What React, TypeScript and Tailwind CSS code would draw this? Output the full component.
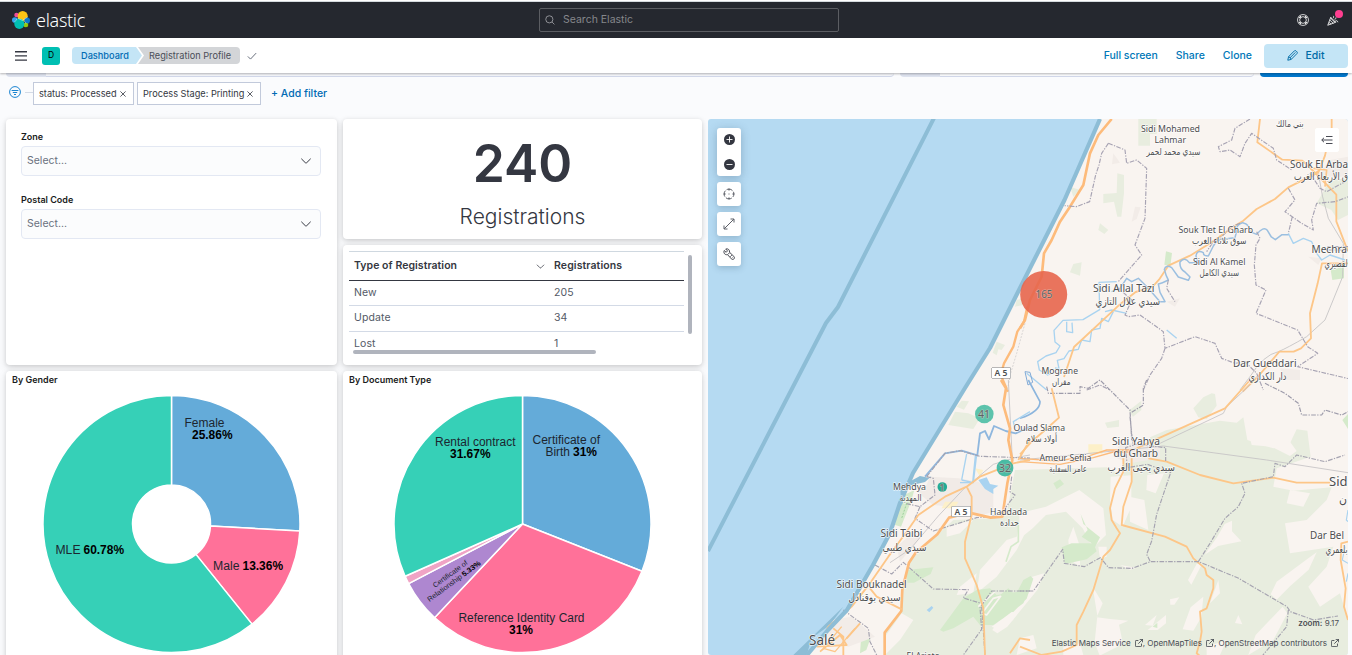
import React from "react";

type Slice = { value: number; color: string };

function slicePath(cx: number, cy: number, r: number, inner: number, from: number, to: number) {
  const pt = (rad: number, t: number) => {
    const a = t * Math.PI * 2 - Math.PI / 2;
    return `${(cx + rad * Math.cos(a)).toFixed(2)} ${(cy + rad * Math.sin(a)).toFixed(2)}`;
  };
  const large = to - from > 0.5 ? 1 : 0;
  if (inner === 0) return `M${cx} ${cy}L${pt(r, from)}A${r} ${r} 0 ${large} 1 ${pt(r, to)}Z`;
  return `M${pt(inner, from)}L${pt(r, from)}A${r} ${r} 0 ${large} 1 ${pt(r, to)}L${pt(inner, to)}A${inner} ${inner} 0 ${large} 0 ${pt(inner, from)}Z`;
}

function Slices({ cx, cy, r, inner, data }: { cx: number; cy: number; r: number; inner: number; data: Slice[] }) {
  const total = data.reduce((s, d) => s + d.value, 0);
  let acc = 0;
  return (
    <g stroke="#fff" strokeWidth="1.5" strokeLinejoin="round">
      {data.map((d) => {
        const from = acc / total;
        acc += d.value;
        return <path key={d.color} d={slicePath(cx, cy, r, inner, from, acc / total)} fill={d.color} />;
      })}
    </g>
  );
}

function T({ x, y, w, s = 12, b, children }: { x: number; y: number; w?: number; s?: number; b?: boolean; children: string }) {
  return (
    <text x={x} y={y} fontSize={s} textLength={w} lengthAdjust="spacingAndGlyphs" fontWeight={b ? 700 : 400} fill={b ? "#000" : "#1c2630"}>
      {children}
    </text>
  );
}

function Panel({ className = "", children }: { className?: string; children: React.ReactNode }) {
  return (
    <section className={`overflow-hidden rounded bg-white shadow-[0_1px_4px_rgba(0,0,0,0.12),0_3px_9px_rgba(0,0,0,0.10)] ${className}`}>
      {children}
    </section>
  );
}

function Chevron({ className = "" }: { className?: string }) {
  return (
    <svg className={className} viewBox="0 0 12 12" fill="none" stroke="#343741" strokeWidth="1" strokeLinecap="round">
      <path d="M1.6 4l3.7 3.7q.7.6 1.4 0L10.4 4" />
    </svg>
  );
}

function Header() {
  return (
    <header className="flex h-9 shrink-0 items-center bg-[#25282f] pl-3 pr-3">
      <svg className="h-[18px] w-[18px]" viewBox="0 0 32 32">
        <ellipse cx="8" cy="7" rx="4" ry="4" fill="#f04e98" />
        <ellipse cx="5" cy="16" rx="5" ry="5" fill="#36a2ef" />
        <ellipse cx="19" cy="9.500" rx="9" ry="9.500" fill="#fec514" />
        <ellipse cx="27" cy="17" rx="5" ry="5.500" fill="#0b77cc" />
        <ellipse cx="24.500" cy="25" rx="4.500" ry="4" fill="#93c90e" />
        <ellipse cx="13" cy="22.800" rx="9" ry="9" fill="#00bfb3" />
        <path d="M9.500 12.500l9 4.300 8.500-5.500M9 14q-1.500 2.500-4.500 5.500M22 18l3 4.500" fill="none" stroke="#fff" strokeWidth=".8" />
      </svg>
      <span className="ml-[6px] w-[430px] font-['Noto_Sans'] text-[18px] font-light leading-none tracking-[-0.3px] text-white">elastic</span>
      <div className="ml-[73px] flex h-6 w-[300px] items-center rounded-[2px] border border-[#5b5d62] pl-[5px]">
        <svg className="h-[10px] w-[10px]" viewBox="0 0 12 12" fill="none" stroke="#a2a4a8" strokeWidth="1">
          <circle cx="5.200" cy="5.200" r="4.300" />
          <path d="M8.500 8.500l2.800 2.800" />
        </svg>
        <span className="ml-[8px] text-[10.500px] text-[#85878b]">Search Elastic</span>
      </div>
      <div className="ml-auto flex items-center">
        <svg className="h-[12px] w-[12px]" viewBox="0 0 16 16" fill="none" stroke="#fff" strokeWidth="1">
          <circle cx="8" cy="8" r="7.300" />
          <circle cx="8" cy="8" r="4.500" />
          <path d="M2.200 4l2.600 1.500M4 2.200l1.500 2.600M12 2.200l-1.500 2.600M13.800 4l-2.600 1.500M2.200 12l2.600-1.500M4 13.800l1.500-2.600M13.800 12l-2.600-1.500M12 13.800l-1.500-2.600" strokeWidth="1.200" />
        </svg>
        <span className="relative ml-[18px] mr-px">
          <svg className="h-[12px] w-[12px]" viewBox="0 0 16 16" fill="none" stroke="#fff" strokeWidth="1.100">
            <path d="M5 4.500L1 15l10.500-4zM3.700 8l4.700 4.500M5 4.500c1 3 3.500 5.500 6.500 6.500M2.500 11l3 2.700M8 5.500c1-.5 1-2 .5-3M10 7c1.500 0 2-1 2-2.500M11 9.500c1.500-1 3-.8 3.500 1.500" />
          </svg>
          <i className="absolute -top-[4px] left-[8px] h-2 w-2 rounded-full bg-[#fe3e90]" />
        </span>
      </div>
    </header>
  );
}

function NavBar() {
  return (
    <nav className="relative z-10 flex h-[35px] shrink-0 items-center bg-white pl-[15px] pr-1 shadow-[0_1px_2px_rgba(0,0,0,0.28)]">
      <svg className="h-[10px] w-3" viewBox="0 0 12 10" fill="#343741">
        <path d="M0 0h12v1.400H0zM0 4.200h12v1.400H0zM0 8.400h12v1.400H0z" />
      </svg>
      <span className="ml-[15px] flex h-[18px] w-[18px] items-center justify-center rounded-[3px] bg-[#00bfb3] text-[8.500px] text-black">D</span>
      <span className="ml-3 flex h-[17px] w-[70px] items-center rounded-l-[4px] bg-[#c4e5f6] pl-[9px] text-[9.200px] font-medium text-[#006bb4] [clip-path:polygon(0_0,64px_0,100%_50%,64px_100%,0_100%)]">
        Dashboard
      </span>
      <span className="-ml-[4px] flex h-[17px] w-[102px] items-center rounded-r-[4px] bg-[#d3d5d8] pl-[11px] text-[9.200px] text-[#4a4d57] [clip-path:polygon(0_0,100%_0,100%_100%,0_100%,6px_50%)]">
        Registration Profile
      </span>
      <svg className="ml-[7px] h-[10px] w-[10px]" viewBox="0 0 12 12" fill="none" stroke="#69707d" strokeWidth="1.200">
        <path d="M1 6.500l3.200 3.200L11 2.500" />
      </svg>
      <div className="ml-auto flex items-center text-[10.500px] font-medium text-[#0077b8]">
        <span className="tracking-[-0.05px]">Full screen</span>
        <span className="ml-[18px]">Share</span>
        <span className="ml-[18px]">Clone</span>
        <span className="ml-3 flex h-6 w-[84px] items-center justify-center rounded bg-[#c4e5f6] text-[#006ba6]">
          <svg className="mr-[7px] h-[11px] w-[11px]" viewBox="0 0 14 14" fill="none" stroke="#006ba6" strokeWidth="1.200">
            <path d="M1 13l1-4.500L9.500 1q1-.7 2 .2l1.200 1.200q.9 1 .1 2L5.300 12zM2 8.700q2.600.4 3.300 3.200M3.500 10.300L10.700 3" />
          </svg>
          Edit
        </span>
      </div>
    </nav>
  );
}

function QueryBarEdge() {
  return (
    <div className="flex h-[4px] shrink-0 pl-[6px] pr-1">
      <i className="w-10 rounded-bl-[4px] bg-[#dde2ee]" />
      <i className="mr-[6px] w-[848px] rounded-br-[4px] border-b border-[#d0d6e8] bg-[#f4f6fa]" />
      <i className="w-[40px] rounded-bl-[4px] bg-[#dde2ee]" />
      <i className="w-[314px] rounded-br-[4px] border-b border-[#d0d6e8]" />
      <i className="ml-[6px] flex-1 rounded-b-[4px] bg-[#0077cc]" />
    </div>
  );
}

function FilterPill({ className, children }: { className: string; children: string }) {
  return (
    <span className={`flex h-[23px] items-center justify-between border border-[#c2cadb] bg-white pl-[5px] pr-[7px] text-[9.200px] text-[#343741] ${className}`}>
      {children}
      <svg className="h-[6px] w-[6px]" viewBox="0 0 6 6" stroke="#343741" strokeWidth=".8">
        <path d="M.4.4l5.200 5.200M5.600.4L.4 5.600" />
      </svg>
    </span>
  );
}

function FilterBar() {
  return (
    <div className="flex h-[42px] shrink-0 items-start pl-[9px] pt-[5px]">
      <svg className="mt-[4px] h-[12px] w-[12px]" viewBox="0 0 12 12" fill="none" stroke="#0077cc" strokeWidth=".9">
        <circle cx="6" cy="6" r="5.400" />
        <path d="M2.600 4.500h6.800M3.800 6.500h4.400M5 8.500h2" />
      </svg>
      <i className="ml-[4px] mt-[10px] h-px w-2 bg-[#d3dae6]" />
      <FilterPill className="w-[101px]">status: Processed</FilterPill>
      <FilterPill className="ml-[3px] w-[124px]">Process Stage: Printing</FilterPill>
      <span className="ml-[10px] text-[10.500px] font-medium leading-[23px] text-[#006bb4]">+ Add filter</span>
    </div>
  );
}

function SelectField({ label }: { label: string }) {
  return (
    <div className="flex w-[300px] flex-col">
      <span className="text-[9px] font-semibold leading-[13px] text-[#1a1c21]">{label}</span>
      <div className="mt-[3px] flex h-[30px] items-center justify-between rounded border border-[#e3e8f3] bg-[#fbfcfd] pl-[5px] pr-2">
        <span className="text-[10.500px] leading-[14px] text-[#69707d]">Select...</span>
        <Chevron className="h-3 w-3" />
      </div>
    </div>
  );
}

function RegistrationTable() {
  const rows = [
    ["New", "205", "h-[25px] border-b"],
    ["Update", "34", "h-[26px] border-b pb-[2px]"],
    ["Lost", "1", "h-[24px]"],
  ];
  return (
    <div className="relative ml-[6px] mt-[6px] w-[335px] text-[10.500px]">
      <div className="flex h-[30px] items-center border-b border-t border-b-[#343741] border-t-[#cfd8e0] pl-[5px] font-semibold text-[#343741]">
        <span className="w-[182px] tracking-[0.05px]">Type of Registration</span>
        <Chevron className="h-[9px] w-[9px]" />
        <span className="ml-[9px] tracking-[0.1px]">Registrations</span>
      </div>
      {rows.map(([a, b, c]) => (
        <div key={a} className={`flex items-center border-[#d3dae6] pl-[5px] tracking-[0.1px] text-[#535966] ${c}`}>
          <span className="w-[200px]">{a}</span>
          <span>{b}</span>
        </div>
      ))}
      <i className="absolute left-[339px] top-[4px] h-[79px] w-[4px] rounded-full bg-[#b0b4bd]" />
      <i className="absolute left-[4px] top-[99px] h-[4px] w-[243px] rounded-full bg-[#b0b4bd]" />
    </div>
  );
}

const GENDER: Slice[] = [
  { value: 25.86, color: "#64abd9" },
  { value: 13.36, color: "#ff7199" },
  { value: 60.78, color: "#36d0b7" },
];
const DOCS: Slice[] = [
  { value: 31, color: "#64abd9" },
  { value: 31, color: "#ff7199" },
  { value: 5.33, color: "#ae87d0" },
  { value: 1, color: "#f0a4c5" },
  { value: 31.67, color: "#36d0b7" },
];

function GenderChart() {
  return (
    <svg className="block h-[266px] w-[331px] font-['Liberation_Sans']" viewBox="6 389 331 266">
      <Slices cx={171.5} cy={524} r={128.5} inner={39} data={GENDER} />
      <T x={184.500} y={427} w={40}>Female</T>
      <T x={192} y={439} w={40.500} b>25.86%</T>
      <T x={55.500} y={554.400} w={25}>MLE</T>
      <T x={83.500} y={554.400} w={40.500} b>60.78%</T>
      <T x={213} y={569.500} w={26.500}>Male</T>
      <T x={242.500} y={569.500} w={40.500} b>13.36%</T>
    </svg>
  );
}

function DocumentChart() {
  return (
    <svg className="block h-[266px] w-[359px] font-['Liberation_Sans']" viewBox="343 389 359 266">
      <Slices cx={522.5} cy={524} r={128.5} inner={0} data={DOCS} />
      <T x={435} y={446.300} w={80.500}>Rental contract</T>
      <T x={450} y={458.300} w={40.500} b>31.67%</T>
      <T x={532.500} y={444.300} w={67.500}>Certificate of</T>
      <T x={545.500} y={456.300} w={24.500}>Birth</T>
      <T x={573} y={456.300} w={24} b>31%</T>
      <T x={458.500} y={622.300} w={126}>Reference Identity Card</T>
      <T x={509} y={634.300} w={24} b>31%</T>
      <g transform="translate(435 588) rotate(-36)">
        <T x={0} y={0} w={41} s={7.200}>Certificate of</T>
      </g>
      <g transform="translate(429.500 602) rotate(-36)">
        <T x={0} y={0} w={41} s={7.200}>Relationship</T>
        <T x={42.500} y={0} w={21.500} s={7.200} b>5.33%</T>
      </g>
    </svg>
  );
}

type Label = [string, number, number, number, number];
// text, left, baseline, width, size
const LABELS: Label[] = [
  ["Sidi Mohamed", 1141, 132, 59, 9.7],
  ["Lahmar", 1154.5, 143, 31.500, 9.7],
  ["سيدي محمد لحمر", 1146.500, 155, 54, 9.5],
  ["بني مالك", 1276, 127, 27.500, 9.5],
  ["Souk El Arba", 1290, 167.500, 58, 10.800],
  ["ق الأربعاء الغرب", 1294, 180, 54, 10.500],
  ["Souk Tlet El Gharb", 1178.500, 233, 74.500, 9.7],
  ["سوق ثلاثاء الغرب", 1192, 244, 54.500, 9.5],
  ["Sidi Al Kamel", 1193, 264.500, 52.500, 9.7],
  ["سيدي الكامل", 1199.500, 276, 39.500, 9.5],
  ["Mechra", 1311.500, 252.500, 35.500, 10.800],
  ["لقصيري", 1324.500, 267, 23, 10.500],
  ["Sidi Allal Tazi", 1093, 291.500, 61.500, 10.800],
  ["سيدي علال التازي", 1095.500, 305, 64.500, 10.500],
  ["Mograne", 1041.500, 373.500, 36.500, 9.7],
  ["مقران", 1052, 385, 18.500, 9.5],
  ["Dar Gueddari", 1233, 367, 63.500, 10.800],
  ["دار الكداري", 1248.500, 380, 38, 10.500],
  ["Oulad Slama", 1013.500, 430.500, 51.500, 9.7],
  ["أولاد سلام", 1026, 442, 31, 9.5],
  ["Ameur Seflia", 1039.500, 460.500, 52, 9.7],
  ["عامر السفلية", 1049, 471.500, 38, 9.5],
  ["Sidi Yahya", 1112, 444.500, 48, 10.800],
  ["du Gharb", 1113.500, 456.500, 44.500, 10.800],
  ["سيدي يحيى الغرب", 1107.500, 470.500, 67.500, 10.500],
  ["Mehdya", 893, 489.500, 33, 9.7],
  ["المهدية", 899.500, 500.500, 22, 9.5],
  ["Sidi Taibi", 880.500, 537, 42, 10.800],
  ["سيدي طيبي", 882.500, 550.500, 44, 10.500],
  ["Haddada", 990, 514.500, 37, 9.7],
  ["حدادة", 1000, 525.500, 19, 9.5],
  ["Sidi Bouknadel", 836.500, 587.500, 70, 10.800],
  ["سيدي بوقنادل", 848.500, 601, 52, 10.500],
  ["Salé", 809, 645, 26, 13.800],
  ["El Arjate", 906.500, 659, 33, 9.7],
  ["Sid", 1329, 485.500, 18.500, 13],
  ["ن", 1339, 503, 8, 12],
  ["Dar Bel", 1310, 539, 34, 10.800],
  ["بلعمري", 1325.500, 552.500, 22, 10.500],
];

const FOREST = "#e8eddf";
const GREEN = "#d5eacb";
const ROAD = "#fdc688";
const MAJOR = "#fdbb7b";
const RIVER = "#a9d3f0";
const LAND = "#f9f4f0";

function MapCanvas() {
  return (
    <svg className="block h-[536px] w-[640px]" viewBox="708 119 640 536" fill="none" strokeLinejoin="round">
      <rect x="708" y="119" width="640" height="536" fill="#b5daf2" />
      <path d="M1101 119L1065 200 1020 288 990 348 965 388 913 473 900 503 890 533 873 565 847 610 828 630 807 655H1348V119z" fill={LAND} />
      <path d="M934 118L838 307 826 323 708 551" stroke="#8dbdd6" strokeWidth="4" />

      {/* north-east lowlands */}
      <g transform="translate(1020 110) scale(.33333)">
        <path d="M355 27h55v45h-20v35h-35zM292 190l20 5v55l-8 70-12 0-10-45-32 5v-28l40-3zM150 230l30 10-20 20zM240 340l25 20-12 12-18-12zM160 462l25-5-5 40-30-10zM890 280l40-70 54-5v110l-30 15-20-30z" fill={FOREST} />
        <path d="M438 424l18 5-5 40-18-5zM932 480l40-10v35l-35 5z" fill={GREEN} />
        <path d="M345 290l-10 45 15 -8 12-35zM280 130l20 28-24 5zM440 575l40-10-15 25zM780 775l60 5v30h-50zM865 440l40 5-10 20zM890 200l40-50 54-10 0 60z" fill="#f2ece8" />
        <g stroke="#c2c0c2" strokeWidth="2.500">
          <path d="M895 190Q905 260 925 325L970 400 968 500 915 630 860 680Q800 715 775 725 730 735 690 800L660 840" />
        </g>
        <g stroke={RIVER} strokeWidth="4">
          <path d="M805 370l15 30 30-15 25 10 15 35 15 20 25-15 45 15M290 515l-53 2 2 82-50 30-60 2-27 30 3 35 15 12-12 20-30 10-25 17 5 25 25 15 10-5M140 635v30l18 3-2-30M280 605l-15 30-20-10-5 30-25 5-5 35-25-5-10 28-28 5-15 23-20 5 5 25-12-2" />
          <path d="M470 685l-30-25M20 790l60 50M320 610l-45-10-20 5" />
        </g>
        <g stroke={MAJOR} strokeWidth="8">
          <path d="M275 27L235 75 210 130 190 225 150 290 120 335 95 390 72 430 65 500 30 570 15 630 0 655" />
        </g>
        <g stroke={ROAD} strokeWidth="5.500">
          <path d="M720 27l-8 70 75 52 60 3 42 40 60 62v80l35 90M935 27v35l-10 30-10 45-20 50-90 45-40 35-55 30-40 35-25 15-70 50-65 40-65 30-28 42-20 22-50 15-45 35-140 130-30 90M984 460h-78l-13 60-23 90 3 75-30 30-22 10h-43l-60 70-50 50" />
        </g>
        <path d="M690 365q0-22-22-27-22 8-18 25l-5 20-40 5-15 5-10 15-15 30q-15 0-15-10-20-10-22 10l5 20-25 0q-15-20-28-2-2 20 15 30l15 15-5 10-30-10-20-28q-18-10-22 5 5 20 12 32-20 10-30 12l5 25 15 28-15 0-35-40-30-30-20 10-15-10-20 30-25 10M690 365l20 8q20-25 32-12l12 20 12 8 20-15h20" stroke="#9bbfe0" strokeWidth="4.500" />
        <g stroke="#a7a3b3" strokeWidth="3.500" strokeDasharray="14 4 4 4">
          <path d="M690 27l-45 28-10 35-40 20 5 15 30-5 30 20 15-40 20-30 65 45 10 35 45 30M265 100l50 20 5 40 30-10 30 25-5 150-30 80 20 30-70 80M265 100l-20 30-8 35-10 30-18 80-40 15-35-3M870 190l30 45 20 10 55-30M805 235l20 35-30 35 50 35 35 20-5-30 15-50 55-5 55-20M817 320l-12 50M660 340l-25 10-30 30-25 15-20 30M445 510l-5 25 25 40M710 365l10 20-12 20-5 60 5 60 30 15-30 70 125 50 30 50 30 20-60 40 170 40M984 410h-60l-5 10h65M290 530l45 40-20 45 10 5 35-5 70 50 5 50 90-35 60 20 20 45 40 15 30-5 35 35 20 50M435 715l-10 30-35 50-20 45M200 840l40-15 30 15" />
        </g>
        <path d="M880 175l40 5-5 50M885 190l20-15" stroke={ROAD} strokeWidth="5" />
      </g>

      {/* northern coast strip */}
      <g transform="translate(700 110) scale(.33333)">
        <path d="M890 695l25 10-10 15 -10-2-5 18-12-8zM950 570l20-5v20l-25 5z" fill={FOREST} />
        <path d="M982 590l-10 45-20 30-12 45-28 50-10 35 22 50" stroke={MAJOR} strokeWidth="7" />
        <path d="M975 640l-25 90-18 60-10 50" stroke="#d8d5d4" strokeWidth="3" strokeDasharray="6 4" />
        <path d="M975 785l15 2 8 30-14 8z" stroke="#7fa9d6" strokeWidth="3" />
      </g>

      {/* southern forests, clearings and parks */}
      <g transform="translate(860 380) scale(.33333)">
        <path d="M465 270L740 262 790 290V235L870 228V172L920 150 1080 122 1130 128 1150 112 1162 180 1240 205 1290 190 1310 148 1342 152 1352 230 1250 265 1240 320 1300 332 1415 322 1400 360 1340 420 1275 430 1290 520 1420 500 1400 560 1345 620 1380 680 1440 640 1464 720V825H75V760L125 690V620L145 545 280 420 400 415 440 400zM1000 85l30-33 25-12 10 2 5 35-30 40-25-5zM806 92l38-30v28l-25 20zM735 128l42-8v20l-35 4zM265 135l20-40 40 5 35 15-20 32zM290 80l15-18 22 2-15 25z" fill={FOREST} />
        <path d="M1160 130l15 65 60 5 55 28 20-15-20-28-60 5-45-15-15-45zM752 290l62-4v94l-26 60-30-20-8-60zM478 400l80-20 100-50 72 55 8 80-40 40-30-60-50-50-60 10-40 40-50 40 10-60zM440 480l30-10 20-50 30-10-50 100-60 80-60 50 10-70zM512 592l40-12-20 50-90 110-30 20-15-10 60-90zM625 480l15-40 20 60 0 60-30-20zM698 620l30 50-18 42 40 5 55 5-28 12 12 58-70 35-15-40 8-80zM992 682l38-32-6 62-24 40-32-4zM930 658l28-6-15 22-12 0zM918 705l-55 45 30 0 25-20zM855 735l35-30-12 32zM1010 552h16l-32 62-10-14zM1072 470l22-38 22-10v32l28 30-70 14-40 26zM1268 680l14 20-42 80-75 45 22-60zM1250 605l95-70 25-18-24 52-56 50-40 40-18-16zM808 350l45 10 12 90-55-25zM862 285l50-5-25 60-28-10zM1135 705l12 28-22-4zM1075 600l-25 70 30-30zM1290 330l60 10-20 40-50-10zM780 555l50 8-20 6zM715 500l25 0 0 30-20 5zM160 720l-40 60-45 45V770l50-70zM300 620l50-40-10 60-50 5zM395 740l70-50-5 30-40 30zM480 775l40-10 10 40-60 20zM610 800l50-10 10 35h-60zM1040 800l60-20-20 45h-40zM260 440l80-20-40 40-40 10z" fill={LAND} />
        <path d="M662 402l8 30 50 40-15 30 5 12-30 24-65 14-10-50 30-12 60 0-30-20 18-20zM580 310l20-12 12 14-22 16zM490 600l22-12 8 8-20 60-40 40h-20zM140 570l80-8-8 20-50 26-20 0zM240 750l70-95 40-25 40-5 20 20 100-15-20 40-60 45-30 20-40 0-20-25-60 35-30 10zM395 665l50-40 20 20zM325 350l30 0 8 18-25 12zM1447 120l17-18v45zM878 740l14-12v16zM105 435l8-50 20-40 30-15-10 35-30 75zM5 750l28 20-14 40-19 10z" fill={GREEN} />
        <path d="M400 655l22-6-42 56-14-5zM355 680l50-45" stroke={LAND} strokeWidth="5" />
        <path d="M475 435l0 50-22 15-15 45" stroke={GREEN} strokeWidth="5" />
        <path d="M210 290l85 5 60 10 45 30v60l-50 15-30-25-100-10-50-40 30-20zM780 190l70 0 50 10v35l-90 15-50-20zM110 500l40-35 30 10-60 70z" fill="#f1ebe7" />
        <path d="M685 193h42v28h-42zM255 365h40l-10 20h-40zM345 265l25 5-10 20z" fill="#fdf0c8" />
      </g>

      <g transform="translate(1020 380) scale(.33333)">
        <path d="M0 240l210-20 220-22 310 42 244 38M420 190l190-90 10-20 70-65" stroke="#c4c2c4" strokeWidth="2.500" />
        <path d="M80 20l5 20 95 0 0-20 25 5 35-25 90 90 5 90M380 0l-10 25 0 50-40 25M735 10l60 30 40 30 10 35 60 0 10-15 50 15 20-10M330 110l8 80" stroke="#9d9baa" strokeWidth="3.500" strokeDasharray="14 4 4 4" />
        <path d="M25 0l35 65q0 30-60 50" stroke="#8cb5dd" strokeWidth="5" />
        <path d="M0 245l120 8 100-20 60-17 50 0M0 235l110 8 90-13 60-20h80" stroke={MAJOR} strokeWidth="4" />
        <g stroke={ROAD} strokeWidth="5.500">
          <path d="M95 25l22 88-45 40-35 30-37 40M690 0l-75 85-100 45-100 45-65 30M385 235l55 10 100 40 100 25 120-17 70 15h100M310 235l0 40-25 50-15 60 5 35 15 25 10 15-30 50-20 20-30 100-30 65-20 40 0 60-45 20-60 10-65-25M335 235v70l-25 75-5 55 130 35 65 30 20 35 35 30 5 20 20 15v25l-20 60-20 10 5 60-5 30-10 35 25 20M984 485l-20 5-2 50 15 85-5 55 12 40" />
        </g>
        <path d="M984 390l-5 30 5 5M975 500l-8 40 17 10M984 580l-5 25" stroke={RIVER} strokeWidth="3.500" />
        <g stroke="#a5a3b0" strokeWidth="3.500" strokeDasharray="14 4 4 4">
          <path d="M0 633h40l88-125 5 42 60 10 48-27 25 30 70 2 55-20 145 0 120 50 145 85 10 15 70 25 73-12M390 543l-10-20 15-40 15-80 20-60 22-65-70-25-60 10-5-60 30-10 90 10v40M535 545l35-55 45-75 40-35 20-40-10-30 95-20 5-40 30 10 35-35 85 20 60-20M805 690l-5 50-75 90" />
        </g>
      </g>

      {/* south-west coast */}
      <g transform="translate(700 380) scale(.33333)">
        <path d="M395 720l60-10 70 60-80 30-80-20z" fill="#f2ece8" />
        <path d="M600 320l60-32 25 5 10-5-20 18-50 12-20 60zM430 680l-40 55-55 40-15 50h-40z" fill="#8dbdd6" />
        <path d="M835 300l25-8 10 20 25 5-15 10 0 15-25-15zM680 690l15-12 5 5-12 14z" fill={RIVER} />
        <path d="M925 0l12 240M990 225l-45 8-65 20-90 75-75 80-85 100-60 40" stroke="#c4c2c4" strokeWidth="2.500" />
        <path d="M785 300l15-78M785 300l35 8 10-85M780 308h38l8-80M990 95l-50 30 5 20" stroke={RIVER} strokeWidth="4" />
        <path d="M675 290l60-70 50-8 50 15M832 225l8-65 15-7 12 25 15-40 35 15 30 7 43-20" stroke="#8fb7de" strokeWidth="5.500" />
        <g stroke="#a5a3b0" strokeWidth="3.500" strokeDasharray="14 4 4 4">
          <path d="M680 290l55-70 45-8 60 17 150 5M680 290l20 5 5 50-45 35-45-10M660 380l-15 35 55 38 130-40 60-5M935 290l-5 45 15 10-45 60M525 555l50 27 35-35 90 80 105 2-15 25 50 15M990 633H875l-35 50 5 65-55 77M430 690l75 55 5 40 20 40M845 680l10 145" />
        </g>
        <g stroke={MAJOR} strokeWidth="8">
          <path d="M903 0l15 25-8 50 20 70-5 35 12 60-15 70-15 100-35 3-65-15-60 15-35 50-65 55-20 30-20 80-3 65-50 65v90" />
        </g>
        <g stroke={ROAD} strokeWidth="5.500">
          <path d="M990 240l-50 10-100 40-40 30-65 30-80 55-35 50-55 75-55 80-55 70-70 60-30 60M800 320l15 30 0 55-20 80 0 50 35 80 20 70 5 140M510 625l20 25 75 38M990 180l-35 60M990 780l-30-5-30 45M400 745l30 25 0 55M440 775l40-45M350 800l90-5-20-30-60 50" />
          <path d="M425 740l-55 65 35 10 60-70" strokeWidth="4" />
        </g>
        <path d="M595 385l15-45M620 370l-15 45" stroke="#9bd29a" strokeWidth="3" strokeDasharray="6 4" />
      </g>

      <path d="M1100 119L1064.500 200 1019.500 289 990 348 965 388 913 473 900 503 890 533 873 565 847 610 828 630 807 655" stroke="#8dbdd6" strokeWidth="4.200" />

      <g className="font-['Noto_Sans','DejaVu_Sans',sans-serif]" fill="#4d4e50" stroke="rgba(255,255,255,.75)" strokeWidth="1.500" paintOrder="stroke">
        {[[1001, 373], [961, 511.500]].map(([x, y]) => (
          <g key={x}>
            <rect x={x - 9} y={y - 5} width="18.500" height="10" fill="#fff" stroke="#77797c" strokeWidth="1" />
            <text x={x} y={y + 3.300} fontSize="8.500" fontWeight="600" textAnchor="middle">A 5</text>
          </g>
        ))}
        {LABELS.map(([t, x, y, w, s]) => (
          <text key={t} x={x} y={y} fontSize={s} textLength={w} lengthAdjust="spacingAndGlyphs">{t}</text>
        ))}
      </g>

      <circle cx="1043.700" cy="294.500" r="23.500" fill="#e7664c" fillOpacity=".9" />
      <circle cx="984.300" cy="414" r="9.300" fill="#54c0a8" fillOpacity=".95" />
      <circle cx="1005" cy="468" r="8.400" fill="#40b8a0" fillOpacity=".95" />
      <circle cx="942.300" cy="487" r="4.800" fill="#22ab95" />
      <g className="font-['Noto_Sans']" fill="#5f6366" stroke="rgba(220,205,195,.6)" strokeWidth="1.200" paintOrder="stroke" textAnchor="middle" fontSize="10.500">
        <text x="1044" y="298.300" textLength="17" lengthAdjust="spacingAndGlyphs">165</text>
        <text x="984" y="418">41</text>
        <text x="1005" y="472">32</text>
        <text x="942" y="490.500" fontSize="9.500">1</text>
      </g>
    </svg>
  );
}

function MapButton({ children, className = "" }: { children: React.ReactNode; className?: string }) {
  return (
    <span className={`flex h-6 w-6 items-center justify-center rounded-[3px] bg-white shadow-[0_2px_6px_rgba(40,70,100,0.25)] ${className}`}>
      <svg className="h-3 w-3" viewBox="0 0 12 12" fill="none" stroke="#343741" strokeWidth=".9">{children}</svg>
    </span>
  );
}

function ExternalIcon({ className = "" }: { className?: string }) {
  return (
    <svg className={`ml-[4px] h-2 w-2 ${className}`} viewBox="0 0 8 8" fill="none" stroke="#343741" strokeWidth=".8">
      <path d="M3.400 1.500H1.200q-.8 0-.8.800v4.500q0 .8.800.800h4.500q.8 0 .8-.800V4.600M4.700.4h2.900v2.900M7.600.4L3.300 4.700" />
    </svg>
  );
}

function MapPanel() {
  return (
    <section className="relative h-[536px] w-[640px] overflow-hidden rounded-[3px]">
      <MapCanvas />
      <div className="absolute left-[9px] top-[9px] flex flex-col gap-[6px]">
        <div className="flex h-12 w-6 flex-col items-center justify-between rounded-[3px] bg-white py-[6px] shadow-[0_2px_10px_rgba(40,70,100,0.3)]">
          {["M2.500 5.500h6M5.500 2.500v6", "M2.500 5.500h6"].map((d) => (
            <svg key={d} className="h-[11px] w-[11px]" viewBox="0 0 11 11">
              <circle cx="5.500" cy="5.500" r="5.500" fill="#343741" />
              <path d={d} stroke="#fff" strokeWidth=".9" />
            </svg>
          ))}
        </div>
        <MapButton>
          <circle cx="6" cy="6" r="4.900" strokeDasharray="6.200 1.500" strokeDashoffset="3.100" strokeWidth=".8" />
          <path d="M6 .6v2M6 9.400v2M.6 6h2M9.400 6h2M5.500 6h1" strokeWidth=".8" />
        </MapButton>
        <MapButton>
          <path d="M1.500 10.500l9-9M7.500 1h3.500v3.500M1 7.500V11h3.500" strokeWidth=".8" />
        </MapButton>
        <MapButton>
          <path d="M1.200 2.500l2 1.800 1.300-1.400L2.700 1C5 .2 7 2 6.500 4.300l4.300 4c1.700 2-.6 4.300-2.500 2.500L4.500 6.600C2 7.300.2 5 1.200 2.500zM5 6.400l1.600-1.700M7.300 8.700l1.500-1.500M9.300 9.600h.5" />
        </MapButton>
      </div>
      <div className="absolute left-[607px] top-[9px] rounded-[3px] bg-white">
        <MapButton className="shadow-none">
          <path d="M5 2.500h6.500M1 6h10.500M5 9.500h6.500M3 3.800L.7 6 3 8.200" />
        </MapButton>
      </div>
      <div className="absolute right-[9px] top-[498px] text-[8.100px] leading-[12px] text-[#4d4f55]">
        <b className="font-semibold">zoom:</b> 9.17
      </div>
      <div className="absolute right-[9px] top-[518px] flex items-center whitespace-nowrap text-[8.050px] leading-[12px] text-[#4a4d55]">
        Elastic Maps Service <ExternalIcon />,&nbsp;OpenMapTiles <ExternalIcon />,&nbsp;OpenStreetMap contributors <ExternalIcon />
      </div>
    </section>
  );
}

export default function App() {
  return (
    <div className="flex h-[655px] w-[1352px] flex-col overflow-hidden bg-[#fafbfd] font-['Inter',sans-serif] antialiased">
      <div className="h-[2px] shrink-0 border-b border-[#d5dade] bg-white" />
      <Header />
      <NavBar />
      <QueryBarEdge />
      <FilterBar />
      <main className="flex gap-[6px] pl-[6px]">
        <div className="flex w-[331px] flex-col gap-[6px]">
          <Panel className="flex h-[246px] flex-col gap-[17px] px-[15px] pt-[11px]">
            <SelectField label="Zone" />
            <SelectField label="Postal Code" />
          </Panel>
          <Panel className="h-[290px]">
            <h2 className="h-[18px] pl-[6px] text-[9px] font-semibold leading-[18px] text-[#1a1c21]">By Gender</h2>
            <GenderChart />
          </Panel>
        </div>
        <div className="flex w-[359px] flex-col gap-[6px]">
          <Panel className="flex h-[120px] flex-col items-center">
            <span className="mt-[13px] text-[51.500px] font-semibold leading-[63px] text-[#343741]">240</span>
            <span className="mt-[8px] text-[21px] font-light leading-[28px] text-[#343741]">Registrations</span>
          </Panel>
          <Panel className="h-[120px]">
            <RegistrationTable />
          </Panel>
          <Panel className="h-[290px]">
            <h2 className="h-[18px] pl-[6px] text-[9px] font-semibold leading-[18px] text-[#1a1c21]">By Document Type</h2>
            <DocumentChart />
          </Panel>
        </div>
        <MapPanel />
      </main>
    </div>
  );
}
